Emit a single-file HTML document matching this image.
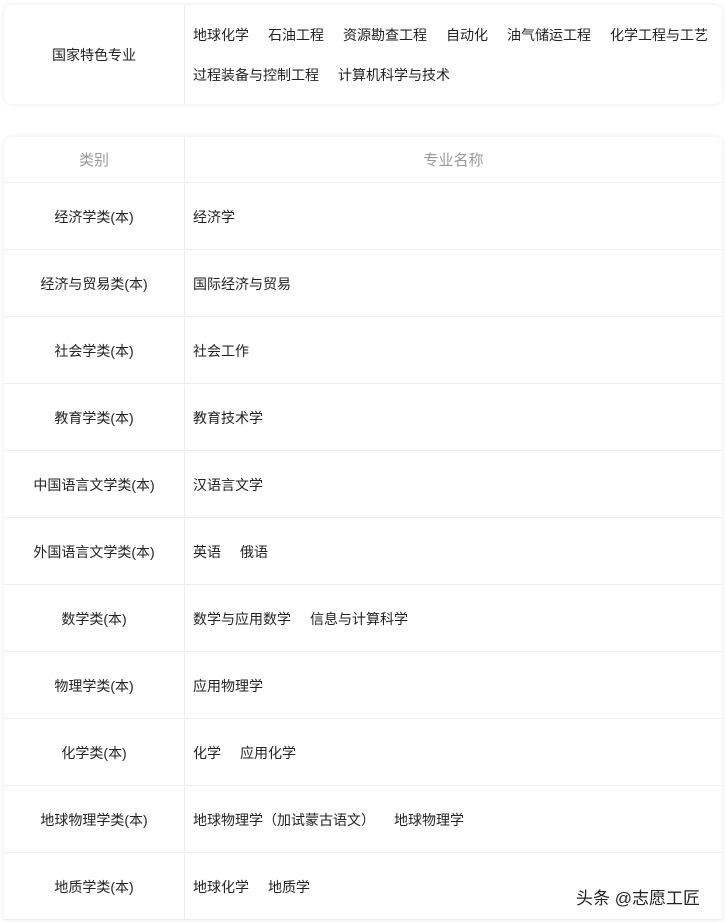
<!DOCTYPE html><html><head><meta charset="utf-8"><style>
body{margin:0;background:#fff;width:726px;height:922px;overflow:hidden;font-family:"Liberation Sans","Noto Sans CJK SC",sans-serif;font-size:14px;color:#222;position:relative}
.card{position:absolute;left:4px;width:718px;background:#fff;border-radius:8px;box-shadow:0 0 6px rgba(0,0,0,.09)}
.c1{top:5px;height:99px}
.c1 .l{position:absolute;left:0;top:0;width:180px;height:99px;border-right:1px solid #eee;display:flex;align-items:center;justify-content:center;font-size:14px}
.c1 .r{position:absolute;left:189px;top:0;line-height:40px;padding-top:10px;width:540px;white-space:nowrap}
.c1 .r span{margin-right:19px;font-size:14px}
.c2{top:137px;height:783px;border-radius:8px 8px 0 0;overflow:hidden}
.row{display:flex;height:67px;border-bottom:1px solid #eee;box-sizing:border-box;padding-top:1px}
.row .a{width:180px;border-right:1px solid #eee;display:flex;align-items:center;justify-content:center}
.row .b{flex:1;display:flex;align-items:center;padding-left:8px}
.row .b span{margin-right:19px}
.h{height:46px;padding-top:0}
.h .a,.h .b{color:#999;font-size:15px;justify-content:center}
.wm{position:absolute;left:576px;top:884px;font-size:17px;color:#222}
</style></head><body>
<div class="card c1"><div class="l">国家特色专业</div><div class="r"><span>地球化学</span><span>石油工程</span><span>资源勘查工程</span><span>自动化</span><span>油气储运工程</span><span>化学工程与工艺</span><br><span>过程装备与控制工程</span><span>计算机科学与技术</span></div></div>
<div class="card c2">
<div class="row h"><div class="a">类别</div><div class="b" style="padding:0">专业名称</div></div>
<div class="row"><div class="a">经济学类(本)</div><div class="b"><span>经济学</span></div></div>
<div class="row"><div class="a">经济与贸易类(本)</div><div class="b"><span>国际经济与贸易</span></div></div>
<div class="row"><div class="a">社会学类(本)</div><div class="b"><span>社会工作</span></div></div>
<div class="row"><div class="a">教育学类(本)</div><div class="b"><span>教育技术学</span></div></div>
<div class="row"><div class="a">中国语言文学类(本)</div><div class="b"><span>汉语言文学</span></div></div>
<div class="row"><div class="a">外国语言文学类(本)</div><div class="b"><span>英语</span><span>俄语</span></div></div>
<div class="row"><div class="a">数学类(本)</div><div class="b"><span>数学与应用数学</span><span>信息与计算科学</span></div></div>
<div class="row"><div class="a">物理学类(本)</div><div class="b"><span>应用物理学</span></div></div>
<div class="row"><div class="a">化学类(本)</div><div class="b"><span>化学</span><span>应用化学</span></div></div>
<div class="row"><div class="a">地球物理学类(本)</div><div class="b"><span>地球物理学（加试蒙古语文）</span><span>地球物理学</span></div></div>
<div class="row"><div class="a">地质学类(本)</div><div class="b"><span>地球化学</span><span>地质学</span></div></div>
</div>
<div class="wm">头条 @志愿工匠</div>
</body></html>
